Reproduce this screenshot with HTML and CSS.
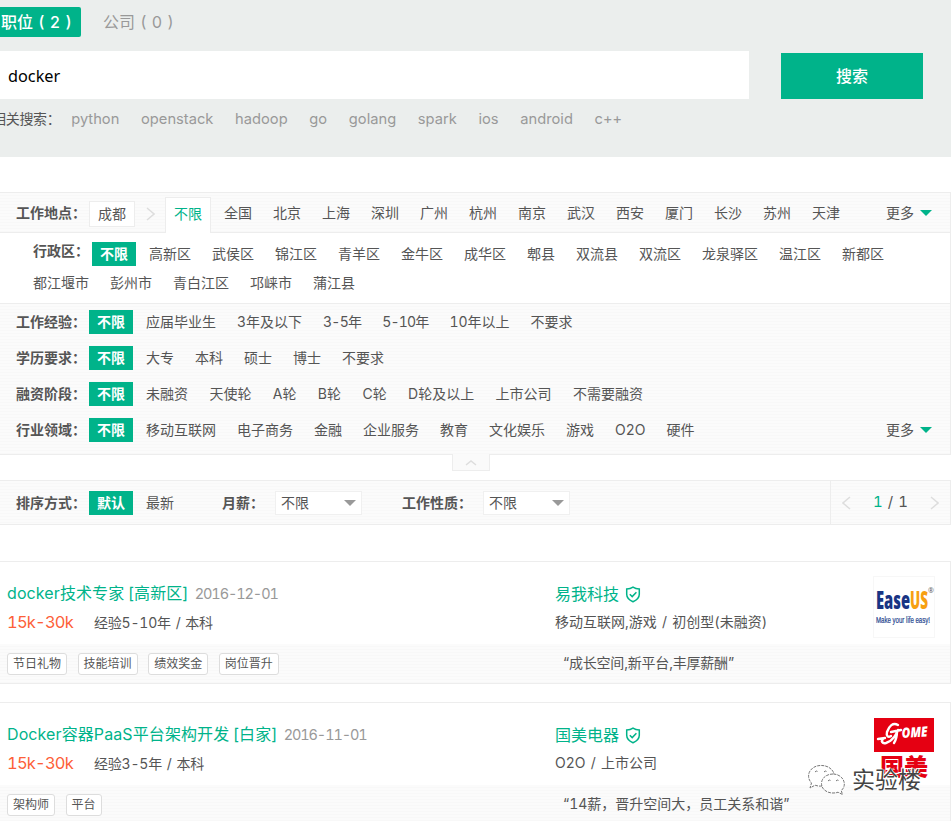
FILE: index.html
```html
<!DOCTYPE html>
<html lang="zh-CN">
<head>
<meta charset="utf-8">
<title>docker</title>
<link rel="stylesheet" href="styles.css">
</head>
<body>
<header class="search">
  <nav class="tabs"><a class="tab on">职位 ( 2 )</a><a class="tab">公司 ( 0 )</a></nav>
  <div class="searchbar"><div class="field">docker</div><button class="go">搜索</button></div>
  <div class="related"><span class="rl">相关搜索：</span><a>python</a><a>openstack</a><a>hadoop</a><a>go</a><a>golang</a><a>spark</a><a>ios</a><a>android</a><a>c++</a></div>
</header>

<section class="filters">
  <div class="row city">
    <b>工作地点：</b><span class="picked">成都</span>
    <svg class="chev" width="9" height="14" viewBox="0 0 9 14"><path d="M1 1l7 6-7 6"/></svg>
    <span class="citytab">不限</span>
    <div class="opts"><a>全国</a><a>北京</a><a>上海</a><a>深圳</a><a>广州</a><a>杭州</a><a>南京</a><a>武汉</a><a>西安</a><a>厦门</a><a>长沙</a><a>苏州</a><a>天津</a></div>
    <span class="more">更多<i></i></span>
  </div>
  <div class="district">
    <div class="drow"><b>行政区：</b><span class="chip">不限</span><div class="opts"><a>高新区</a><a>武侯区</a><a>锦江区</a><a>青羊区</a><a>金牛区</a><a>成华区</a><a>郫县</a><a>双流县</a><a>双流区</a><a>龙泉驿区</a><a>温江区</a><a>新都区</a></div></div>
    <div class="drow second"><div class="opts"><a>都江堰市</a><a>彭州市</a><a>青白江区</a><a>邛崃市</a><a>蒲江县</a></div></div>
  </div>
  <div class="groups">
    <div class="row"><b>工作经验：</b><span class="chip">不限</span><div class="opts"><a>应届毕业生</a><a>3年及以下</a><a class="range">3-5年</a><a class="range">5-10年</a><a>10年以上</a><a>不要求</a></div></div>
    <div class="row"><b>学历要求：</b><span class="chip">不限</span><div class="opts"><a>大专</a><a>本科</a><a>硕士</a><a>博士</a><a>不要求</a></div></div>
    <div class="row"><b>融资阶段：</b><span class="chip">不限</span><div class="opts rounds"><a>未融资</a><a>天使轮</a><a>A轮</a><a>B轮</a><a>C轮</a><a>D轮及以上</a><a>上市公司</a><a>不需要融资</a></div></div>
    <div class="row"><b>行业领域：</b><span class="chip">不限</span><div class="opts"><a>移动互联网</a><a>电子商务</a><a>金融</a><a>企业服务</a><a>教育</a><a>文化娱乐</a><a>游戏</a><a>O2O</a><a>硬件</a></div><span class="more">更多<i></i></span></div>
  </div>
  <div class="fold"><svg width="12" height="6" viewBox="0 0 12 6"><path d="M1 5l5-4 5 4"/></svg></div>
</section>

<section class="sort">
  <b>排序方式：</b><span class="chip">默认</span><a class="newest">最新</a>
  <b class="salary">月薪：</b><span class="select">不限<i></i></span>
  <b class="nature">工作性质：</b><span class="select">不限<i></i></span>
  <div class="pager">
    <svg width="9" height="14" viewBox="0 0 9 14"><path d="M8 1L1 7l7 6"/></svg>
    <span><em>1</em> / 1</span>
    <svg width="9" height="14" viewBox="0 0 9 14"><path d="M1 1l7 6-7 6"/></svg>
  </div>
</section>

<main>
  <article class="job">
    <div class="top">
      <div class="position">
        <h3><a>docker技术专家 <span>[高新区]</span></a><time>2016-12-01</time></h3>
        <p><strong>15k-30k</strong>经验5-10年 / 本科</p>
      </div>
      <div class="company">
        <h4>易我科技<svg class="shield" width="16" height="17" viewBox="0 0 16 17"><path d="M8 1.2C6 2.6 4 3 1.7 3v5.3c0 3.6 2.8 6 6.3 7.5 3.5-1.5 6.3-3.9 6.3-7.5V3C12 3 10 2.6 8 1.2z"/><path d="M4.8 8.2l2.4 2.4 4.2-4.4"/></svg></h4>
        <p>移动互联网,游戏 / 初创型(未融资)</p>
      </div>
      <svg class="logo" width="62" height="62" viewBox="0 0 62 62"><rect class="frame" x=".5" y=".5" width="61" height="61"/><text class="ease" x="3" y="33" textLength="34" lengthAdjust="spacingAndGlyphs">Ease</text><text class="ease us" x="37" y="33" textLength="18" lengthAdjust="spacingAndGlyphs">US</text><text class="reg" x="55" y="17">®</text><text class="life" x="3" y="47" textLength="54" lengthAdjust="spacingAndGlyphs">Make your life easy!</text></svg>
    </div>
    <div class="bottom"><div class="tags"><span>节日礼物</span><span>技能培训</span><span>绩效奖金</span><span>岗位晋升</span></div><q class="tight">成长空间,新平台,丰厚薪酬</q></div>
  </article>
  <article class="job">
    <div class="top">
      <div class="position">
        <h3><a>Docker容器PaaS平台架构开发 <span>[白家]</span></a><time>2016-11-01</time></h3>
        <p><strong>15k-30k</strong>经验3-5年 / 本科</p>
      </div>
      <div class="company">
        <h4>国美电器<svg class="shield" width="16" height="17" viewBox="0 0 16 17"><path d="M8 1.2C6 2.6 4 3 1.7 3v5.3c0 3.6 2.8 6 6.3 7.5 3.5-1.5 6.3-3.9 6.3-7.5V3C12 3 10 2.6 8 1.2z"/><path d="M4.8 8.2l2.4 2.4 4.2-4.4"/></svg></h4>
        <p>O2O / 上市公司</p>
      </div>
      <svg class="logo" width="62" height="62" viewBox="0 0 62 62"><rect class="red" x="1" y="1" width="60" height="34"/><path class="swash" d="M25 8c-5-3-9 1-11 7-1 4 1 6 4 4M12 21L5 22M10 22c-2 2-1 5 3 4 7-2 11-10 12-13M18 15l10-2M24 14c0 4-1 9-3 12"/><text class="gome" x="29" y="21" textLength="26" lengthAdjust="spacingAndGlyphs" transform="rotate(-4 29 21)">OME</text><text class="guomei" x="7" y="58" textLength="48" lengthAdjust="spacingAndGlyphs">国美</text></svg>
    </div>
    <div class="bottom"><div class="tags"><span>架构师</span><span>平台</span></div><q>14薪，晋升空间大，员工关系和谐</q></div>
  </article>
</main>

<div class="watermark">
  <svg width="38" height="33" viewBox="0 0 38 33"><path d="M14 22c-2 .3-5 0-7-.8L2 24l1.500-5C-3 12 2 2 12 1.500c8-.5 13 4 14 8.500"/><path d="M25 10c-7 0-11.500 4.500-11.500 9.500S18 29 25 29c2 0 3.500-.2 5-.8l4.500 2.300-1.300-4C40 21 35 10 25 10z"/><path d="M7 8q1.500-2 3 0M16 8q1.500-2 3 0M20 17q1.500-2 3 0M28 17q1.500-2 3 0"/></svg>
  <span>实验楼</span>
</div>
</body>
</html>
```

FILE: styles.css
```css
* { box-sizing: border-box; }
body {
  margin: 0;
  height: 821px;
  overflow: hidden;
  position: relative;
  background: #fff;
  color: #555;
  font: 14px/20px Inter, "Noto Sans CJK SC", sans-serif;
  font-variant-numeric: tabular-nums;
}
a, b, span, time, strong { white-space: nowrap; }
h3, h4, p { margin: 0; font-weight: 400; }

.search { height: 157px; background: #ebeeed; padding-top: 7px; }
.tabs { display: flex; height: 30px; line-height: 30px; font-size: 16px; word-spacing: 1px; }
.tab { color: #999; padding-left: 22px; }
.tab.on { width: 81px; padding-left: 1px; background: #00b38a; color: #fff; border-radius: 0 2px 2px 0; font-weight: 500; }
.searchbar { display: flex; align-items: center; margin-top: 14px; height: 48px; }
.field { width: 749px; height: 48px; line-height: 50px; padding-left: 8px; background: #fff; color: #000; font-family: "Noto Sans", sans-serif; font-size: 16.3px; }
.go { width: 142px; height: 46px; margin: 2px 0 0 32px; padding: 0 0 2px; border: 0; background: #00b38a; color: #fff; font: 500 16px Inter, "Noto Sans CJK SC", sans-serif; }
.related { display: flex; gap: 21.7px; margin-top: 10px; font-size: 14px; color: #999; }
.related a { font-size: 14.7px; }
.rl { color: #555; width: 64.500px; margin: 0 -7px 0 -8px; letter-spacing: -.3px; }

.filters { margin-top: 35px; position: relative; border: 1px solid #ededed; border-left: 0; border-bottom: 0; }
.city, .groups, .sort, .bottom { background: repeating-linear-gradient(#fbfbfb 0 2px, #f8f8f8 2px 3px); }
.row { display: flex; align-items: center; height: 36px; padding-left: 16px; }
b { width: 73px; flex: none; font-weight: 700; }
.opts { display: flex; gap: 21px; margin-top: -1px; }
.city .opts { margin-top: 0; }
.range { letter-spacing: -.8px; }
.rounds { gap: 21.4px; }
.chip { flex: none; width: 44px; height: 24px; line-height: 23px; text-align: center; margin-right: 13px; background: #00b38a; color: #fff; font-weight: 700; }
.row.city { height: 40px; border-bottom: 1px solid #ededed; }
.picked { width: 46px; height: 26px; line-height: 24px; margin-top: 2px; text-align: center; border: 1px solid #ededed; background: #fff; }
.chev { margin: 2px 10px 0 11px; }
.chev path, .pager path, .fold path { fill: none; stroke: #ddd; stroke-width: 1.5; }
.citytab { align-self: flex-end; width: 46px; height: 36px; line-height: 32px; margin: 0 13px -1px 0; text-align: center; background: #fff; color: #00b38a; border: 1px solid #ededed; border-bottom: 0; }
.more { display: flex; align-items: center; gap: 6px; margin: 0 18px 0 auto; }
.more i { border: 6px solid transparent; border-top-color: #00b38a; border-bottom: 0; }
.district { height: 70px; padding-top: 6px; }
.drow { display: flex; align-items: center; height: 30px; padding-left: 33px; }
.drow b { width: 59px; margin-top: -6px; }
.second { height: 28px; }
.groups { height: 152px; border-top: 1px solid #ededed; border-bottom: 1px solid #ededed; }
.fold { position: absolute; left: 452px; bottom: -16px; width: 38px; height: 17px; display: flex; align-items: center; justify-content: center; background: #fafafa; border: 1px solid #ededed; border-top: 0; }
.fold svg { margin-top: 1px; }

.sort { display: flex; align-items: center; height: 45px; margin-top: 25px; padding-left: 16px; border: 1px solid #ededed; border-left: 0; }
.newest { width: 76px; }
.salary { width: 53px; }
.select { display: flex; align-items: center; justify-content: space-between; width: 87px; height: 24px; padding: 0 5px; background: #fff; border: 1px solid #f0f0f0; }
.select i { border: 6px solid transparent; border-top-color: #999; border-bottom: 0; }
.nature { margin-left: 40px; width: 81px; }
.pager { display: flex; align-items: center; justify-content: space-between; width: 120px; height: 43px; margin-left: auto; padding: 0 11px 0 11px; border-left: 1px solid #ededed; font-size: 15px; word-spacing: 1px; }
.pager span { margin-top: -2px; }
.pager em { color: #00b38a; font-style: normal; }

main { padding-top: 36px; }
.job { height: 123px; margin-bottom: 18px; border: 1px solid #ededed; border-left: 0; }
.top { display: flex; height: 82px; padding: 14px 15px 0 7px; }
.position { width: 548px; padding-top: 7px; }
h3 { font-size: 16px; line-height: 20px; color: #00b38a; }
h3 a { letter-spacing: .1px; word-spacing: -1px; }
time { margin-left: 6px; font-size: 14.5px; letter-spacing: -1.1px; color: #999; }
.position p { margin-top: 8px; letter-spacing: -.2px; word-spacing: 1.2px; }
strong { display: inline-block; width: 87px; font-size: 16.5px; font-weight: 400; letter-spacing: -.8px; color: #fd5f39; }
.company { padding-top: 8px; }
h4 { display: flex; align-items: center; height: 20px; font-size: 16px; color: #00b38a; }
.shield { margin-left: 6px; fill: none; stroke: #00b38a; stroke-width: 1.5; }
.company p { margin-top: 8px; word-spacing: 1.5px; }
.logo { margin-left: auto; flex: none; }
.bottom { display: flex; align-items: center; height: 39px; padding-left: 7px; }
.tags { display: flex; gap: 10.6px; width: 556px; }
.tags span { height: 22px; line-height: 20px; padding: 0 5px; border: 1px solid #ddd; border-radius: 3px; background: #fff; font-size: 12px; }
q { quotes: "“" "”"; white-space: nowrap; margin-top: -2px; }
.tight { letter-spacing: -.2px; }

.frame { fill: #fff; stroke: #f7f7f7; }
.ease { font: 800 24px "Open Sans", sans-serif; fill: #183484; }
.us { fill: #f7a012; }
.reg { font: 7px "Open Sans", sans-serif; fill: #555; }
.life { font: 9px "Liberation Sans", sans-serif; fill: #24438e; stroke: #24438e; stroke-width: .2; }
.red { fill: #e50012; }
.gome { font: italic 800 14px "Open Sans", sans-serif; fill: #fff; }
.swash { fill: none; stroke: #fff; stroke-width: 2.4; stroke-linecap: round; }
.guomei { font: 900 23px "Noto Sans CJK SC", sans-serif; fill: #e50012; }
.watermark { position: absolute; left: 808px; top: 764px; display: flex; gap: 6px; font: 23px/29px "Noto Sans CJK SC", sans-serif; color: #444; text-shadow: -1px -1px 0 #fff, 1px 0 0 #fff; }
.watermark path { fill: #fff; fill-opacity: .7; stroke: #777; stroke-width: 1; stroke-dasharray: 3 1; }
```
